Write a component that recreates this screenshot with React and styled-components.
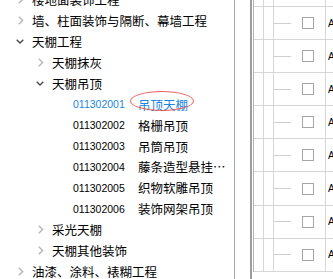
import styled, { createGlobalStyle } from "styled-components";

const GlobalStyle = createGlobalStyle`
  html, body {
    margin: 0;
    padding: 0;
    background: #fff;
  }
  body {
    font-family: "Noto Sans CJK SC", "Liberation Sans", sans-serif;
    color: #000;
  }
`;

const treeData = [
  { level: 0, state: "closed", label: "楼地面装饰工程" },
  { level: 0, state: "closed", label: "墙、柱面装饰与隔断、幕墙工程" },
  { level: 0, state: "open", label: "天棚工程" },
  { level: 1, state: "closed", label: "天棚抹灰" },
  { level: 1, state: "open", label: "天棚吊顶" },
  { level: 2, code: "011302001", label: "吊顶天棚", active: true },
  { level: 2, code: "011302002", label: "格栅吊顶" },
  { level: 2, code: "011302003", label: "吊筒吊顶" },
  { level: 2, code: "011302004", label: "藤条造型悬挂吊顶" },
  { level: 2, code: "011302005", label: "织物软雕吊顶" },
  { level: 2, code: "011302006", label: "装饰网架吊顶" },
  { level: 1, state: "closed", label: "采光天棚" },
  { level: 1, state: "closed", label: "天棚其他装饰" },
  { level: 0, state: "closed", label: "油漆、涂料、裱糊工程" },
];

const Page = styled.div`
  display: flex;
  width: 333px;
  height: 279px;
  overflow: hidden;
  background: #fff;
`;

const TreePanel = styled.div`
  width: 234px;
  flex: none;
  border-right: 1px solid #a9a9a9;
  overflow: hidden;
  padding-right: 6px;
  box-sizing: border-box;
  width: 235px;
`;

const TreeList = styled.ul`
  list-style: none;
  margin: -10.6px 0 0;
  padding: 0;
`;

const TreeRow = styled.li`
  display: flex;
  align-items: center;
  height: 20.9px;
  padding-left: ${({ $level }) => 16 + $level * 20}px;
  font-size: 12.5px;
  white-space: nowrap;
  color: ${({ $active }) => ($active ? "#1c86e3" : "#000")};
`;

const Caret = styled.span`
  width: 16px;
  flex: none;
  display: flex;
  align-items: center;
`;

const Label = styled.span`
  overflow: hidden;
  text-overflow: ellipsis;
  min-width: 0;
`;

const Code = styled.span`
  width: 65px;
  flex: none;
  margin-left: 1px;
  font-family: "Liberation Sans", sans-serif;
  font-size: 10.5px;
`;

const Name = styled.span`
  position: relative;
  overflow: ${({ $active }) => ($active ? "visible" : "hidden")};
  text-overflow: ellipsis;
  min-width: 0;

  ${({ $active }) =>
    $active &&
    `
    &::after {
      content: "";
      position: absolute;
      left: -8px;
      top: -4px;
      width: 64px;
      height: 20px;
      box-sizing: border-box;
      border: 1px solid rgba(232, 70, 70, 0.85);
      border-radius: 50%;
    }
  `}
`;

const Gap = styled.div`
  width: 15px;
  flex: none;
`;

const GridPanel = styled.div`
  flex: 1;
  border-left: 2px solid #9d9d9d;
  padding-left: 1px;
  overflow: hidden;
`;

const Grid = styled.div`
  border-left: 1px solid #b3b3b3;
  margin-top: -26.1px;
`;

const GridRow = styled.div`
  display: grid;
  grid-template-columns: 10px 10px 52px 1fr;
  height: 33.1px;
  box-sizing: border-box;
  border-bottom: 1px solid #d6d6d6;
`;

const Cell = styled.div`
  border-right: ${({ $last }) => ($last ? "none" : "1px solid #d6d6d6")};
  display: flex;
  align-items: center;
  overflow: hidden;
`;

const Connector = styled.span`
  width: 17px;
  height: 1px;
  background: #cfcfcf;
  flex: none;
`;

const Box = styled.span`
  width: 12px;
  height: 12px;
  box-sizing: border-box;
  border: 1px solid #a6a6a6;
  margin-left: 11px;
  flex: none;
`;

const Mark = styled.span`
  font-family: "Liberation Sans", sans-serif;
  font-size: 10px;
  padding-left: 2px;
`;

function Chevron({ open }) {
  if (open) {
    return (
      <svg width="8" height="5" viewBox="0 0 8 5">
        <polyline points="0.7,0.7 4,4 7.3,0.7" fill="none" stroke="#4a4a4a" strokeWidth="1.4" />
      </svg>
    );
  }
  return (
    <svg width="6" height="9" viewBox="0 0 6 9" style={{ marginLeft: 2 }}>
      <polyline points="0.8,0.8 4.6,4.5 0.8,8.2" fill="none" stroke="#b8b8b8" strokeWidth="1.5" />
    </svg>
  );
}

export default function App() {
  return (
    <>
      <GlobalStyle />
      <Page>
        <TreePanel>
          <TreeList>
            {treeData.map((item, i) =>
              item.code ? (
                <TreeRow key={i} $level={item.level} $active={item.active}>
                  <Caret />
                  <Code>{item.code}</Code>
                  <Name $active={item.active}>{item.label}</Name>
                </TreeRow>
              ) : (
                <TreeRow key={i} $level={item.level}>
                  <Caret>
                    <Chevron open={item.state === "open"} />
                  </Caret>
                  <Label>{item.label}</Label>
                </TreeRow>
              )
            )}
          </TreeList>
        </TreePanel>
        <Gap />
        <GridPanel>
          <Grid>
            {Array.from({ length: 9 }).map((_, i) => (
              <GridRow key={i}>
                <Cell />
                <Cell />
                <Cell>
                  <Connector />
                  <Box />
                </Cell>
                <Cell $last>
                  <Mark>A</Mark>
                </Cell>
              </GridRow>
            ))}
          </Grid>
        </GridPanel>
      </Page>
    </>
  );
}
